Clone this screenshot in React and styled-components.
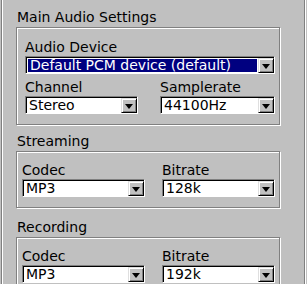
import React from 'react';
import styled, { createGlobalStyle } from 'styled-components';

const GlobalStyle = createGlobalStyle`
  html, body {
    margin: 0;
    padding: 0;
    background: #c0c0c0;
    overflow: hidden;
  }
  body {
    font-family: 'DejaVu Sans', Verdana, sans-serif;
    font-size: 14px;
    color: #000;
  }
`;

const Frame = styled.div`
  box-sizing: border-box;
  width: 304px;
  min-height: 100vh;
  margin-left: 1px;
  padding: 8px 0 0 14px;
  border-left: 1px solid #808080;
  border-right: 1px solid #808080;
  box-shadow: inset 1px 0 0 #fff, 1px 0 0 #fff;
  display: flex;
  flex-direction: column;
`;

const Section = styled.section`
  margin-top: ${(p) => p.$gap || 0}px;
`;

const GroupTitle = styled.div`
  line-height: 18px;
  height: 18px;
  margin-bottom: 1px;
  padding-left: 1px;
  white-space: nowrap;
`;

const GroupBox = styled.div`
  box-sizing: border-box;
  width: 264px;
  border: 1px solid #808080;
  box-shadow: inset 1px 1px 0 #fff, 1px 1px 0 #fff;
  padding: ${(p) => p.$padTop}px 4px 10px ${(p) => p.$padLeft}px;
  display: grid;
  grid-template-columns: ${(p) => p.$columns};
  column-gap: ${(p) => p.$colGap}px;
  row-gap: 4px;
`;

const Field = styled.div`
  display: flex;
  flex-direction: column;
  grid-column: ${(p) => (p.$wide ? '1 / -1' : 'auto')};
  min-width: 0;
`;

const Label = styled.label`
  line-height: 18px;
  height: 18px;
  white-space: nowrap;
`;

const SelectBox = styled.div`
  box-sizing: border-box;
  height: 18px;
  border-style: solid;
  border-width: 1px;
  border-color: #808080 #fff #fff #808080;
`;

const SelectInner = styled.div`
  box-sizing: border-box;
  height: 16px;
  display: flex;
  background: #fff;
  border-style: solid;
  border-width: 1px 0 0 1px;
  border-color: #000;
`;

const SelectValue = styled.div`
  flex: 1;
  min-width: 0;
  line-height: 15px;
  height: 15px;
  padding-left: 2px;
  white-space: nowrap;
  overflow: hidden;
`;

const Highlight = styled.span`
  display: block;
  height: 13px;
  line-height: 13px;
  margin: 1px 1px 1px -1px;
  padding-left: 2px;
  background: #000080;
  color: #fff;
`;

const ArrowButton = styled.div`
  box-sizing: border-box;
  width: 16px;
  height: 15px;
  flex: none;
  background: #c0c0c0;
  border-style: solid;
  border-width: 1px;
  border-color: #dfdfdf #000 #000 #dfdfdf;
  box-shadow: inset 1px 1px 0 #fff, inset -1px -1px 0 #808080;
  display: flex;
  align-items: center;
  justify-content: center;
`;

const Triangle = styled.span`
  width: 0;
  height: 0;
  border-left: 4px solid transparent;
  border-right: 4px solid transparent;
  border-top: 5px solid #000;
  margin-top: 1px;
`;

const Select = ({ value, active }) => (
  <SelectBox>
    <SelectInner>
      <SelectValue>{active ? <Highlight>{value}</Highlight> : value}</SelectValue>
      <ArrowButton>
        <Triangle />
      </ArrowButton>
    </SelectInner>
  </SelectBox>
);

const codecLayout = { $padTop: 9, $padLeft: 5, $columns: '123px 113px', $colGap: 17 };

const App = () => (
  <>
    <GlobalStyle />
    <Frame>
      <Section>
        <GroupTitle>Main Audio Settings</GroupTitle>
        <GroupBox $padTop={10} $padLeft={8} $columns="113px 115px" $colGap={22}>
          <Field $wide>
            <Label>Audio Device</Label>
            <Select value="Default PCM device (default)" active />
          </Field>
          <Field>
            <Label>Channel</Label>
            <Select value="Stereo" />
          </Field>
          <Field>
            <Label>Samplerate</Label>
            <Select value="44100Hz" />
          </Field>
        </GroupBox>
      </Section>

      <Section $gap={7}>
        <GroupTitle>Streaming</GroupTitle>
        <GroupBox {...codecLayout}>
          <Field>
            <Label>Codec</Label>
            <Select value="MP3" />
          </Field>
          <Field>
            <Label>Bitrate</Label>
            <Select value="128k" />
          </Field>
        </GroupBox>
      </Section>

      <Section $gap={10}>
        <GroupTitle>Recording</GroupTitle>
        <GroupBox {...codecLayout}>
          <Field>
            <Label>Codec</Label>
            <Select value="MP3" />
          </Field>
          <Field>
            <Label>Bitrate</Label>
            <Select value="192k" />
          </Field>
        </GroupBox>
      </Section>
    </Frame>
  </>
);

export default App;
